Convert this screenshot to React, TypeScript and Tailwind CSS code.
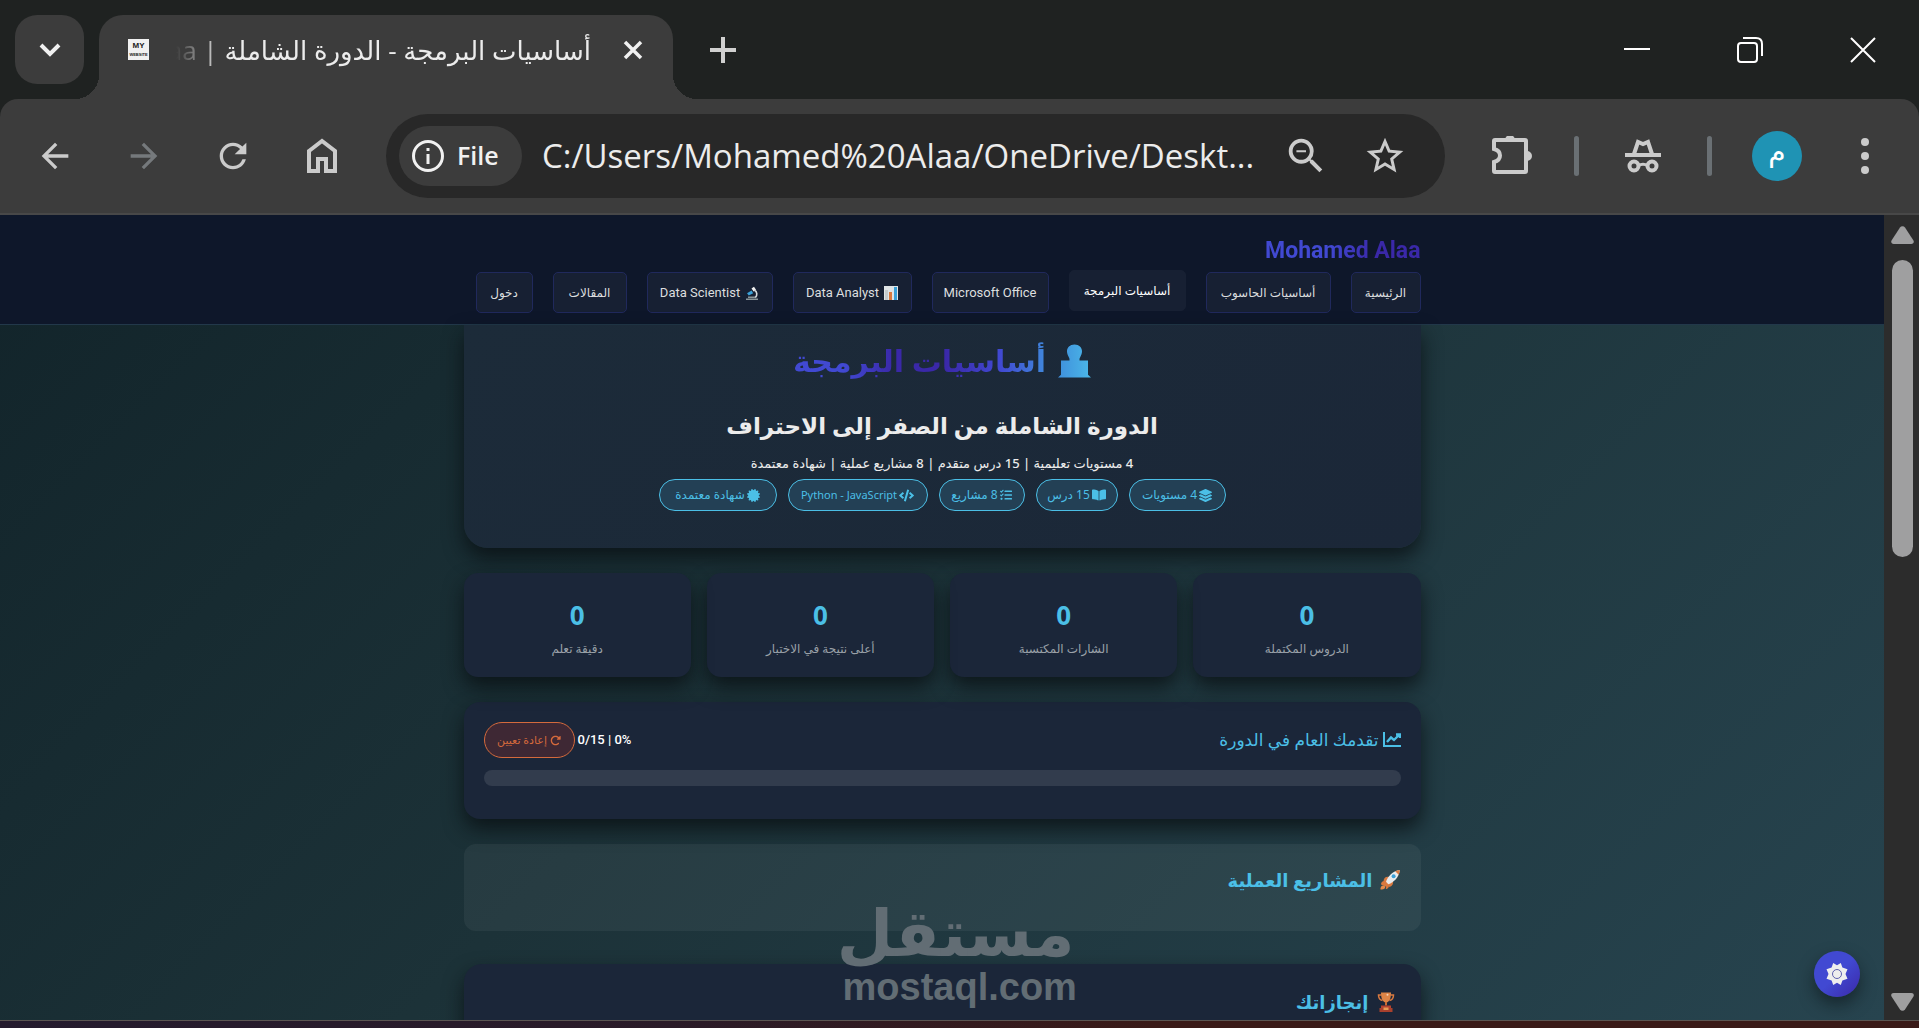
import React, { useState } from 'react';
import {
  FaLayerGroup,
  FaBookOpen,
  FaTasks,
  FaCode,
  FaCertificate,
} from 'react-icons/fa';
import { FaRotateRight } from 'react-icons/fa6';
import { MdArrowBack, MdArrowForward, MdRefresh, MdStarOutline, MdZoomOut } from 'react-icons/md';

const ChartEmoji = () => (
  <svg viewBox="0 0 14 14" className="w-[14px] h-[14px] shrink-0">
    <rect width="14" height="14" fill="#dfe4e6" />
    <rect x="1" y="4" width="3" height="10" fill="#c4cacc" />
    <rect x="5" y="6" width="3" height="8" fill="#d9793f" />
    <rect x="10" y="1" width="3" height="13" fill="#3aa0d8" />
  </svg>
);

const MicroscopeEmoji = () => (
  <svg viewBox="0 0 14 14" className="w-[14px] h-[14px] shrink-0">
    <path d="M6.5 2.5 9 .8l2 3-2.4 1.8z" fill="#f0f0f0" />
    <path d="M2 7.2 6.6 4.6l1.6 2.6-4.4 2.4z" fill="#3aa0d8" />
    <path d="M9.5 4.2c2.6 1.4 3.2 5 .8 7.4" fill="none" stroke="#d5dadc" strokeWidth="1.6" />
    <path d="M1 13.2h12M3 11.2h7" stroke="#8b9599" strokeWidth="1.4" />
  </svg>
);

const RocketEmoji = () => (
  <svg viewBox="0 0 22 22" className="w-[22px] h-[22px] shrink-0">
    <path d="M2 15.5c0-2.6 2-4 4-3.4l3.8 3.8c.6 2-1 4-3 4.2l.4-2.4z" fill="#d9793f" />
    <path d="M1.5 20.5c-.4-2.6 1-4.3 3-4.1 1.9.2 2.3 2.1.9 3.4-1 .8-2.3.9-3.9.7z" fill="#e58a4a" />
    <path d="M4.5 11.5c1-3.3 2.9-4.1 5.4-3.5l4 4c.6 2.7-.2 4.7-3.4 6z" fill="#d9793f" />
    <path d="M7 12.8C8.8 7.3 13.5 2 20.8 1c-.7 7.5-6 12.3-11.5 14.3z" fill="#e8eaec" />
    <path d="M16.2 2.3c1.4-.7 3-1.200 4.600-1.300-.1 1.700-.6 3.300-1.200 4.700z" fill="#d9793f" />
    <circle cx="14.6" cy="7.3" r="2" fill="#3aa0d8" />
  </svg>
);

const TrophyEmoji = () => (
  <svg viewBox="0 0 18 20" className="w-[18px] h-5 shrink-0">
    <path d="M4.5 3h-3c0 3 1 5 4 5.5M13.5 3h3c0 3-1 5-4 5.5" fill="none" stroke="#d9793f" strokeWidth="1.5" />
    <path d="M4 .5h10c0 5.5-1.2 9.5-5 10-3.8-.5-5-4.5-5-10z" fill="#dd8446" />
    <path d="M8 10h2v3.5H8z" fill="#c96b34" />
    <path d="M4 13.5h10v3H4z" fill="#b5432f" />
    <path d="M2.5 16h13v4h-13z" fill="#a8402d" />
    <path d="M6.5 15.5h5V18h-5z" fill="#e79a55" />
    <circle cx="10.5" cy="2.8" r="1" fill="#f3d6bd" />
  </svg>
);

const CoderEmoji = () => (
  <svg viewBox="0 0 33 34" className="w-[33px] h-[34px] shrink-0">
    <defs>
      <linearGradient id="coder" x1="0" x2="1">
        <stop offset="0" stopColor="#3f8fdc" />
        <stop offset="1" stopColor="#4bb8e8" />
      </linearGradient>
    </defs>
    <path
      d="M16.5.5c4.600 0 7.500 3 7.500 6.800 0 2.200-.8 4-1.600 5.400-.5.900-.9 1.500-.9 2.800v1H30v14.200l3 2.800H0l3-2.800V16.500h8.500v-1c0-1.300-.4-1.900-.9-2.800C9.800 11.300 9 9.500 9 7.300 9 3.500 11.900.5 16.500.5z"
      fill="url(#coder)"
    />
  </svg>
);

const ProgressIcon = () => (
  <svg viewBox="0 0 18 16" className="w-[18px] h-4 shrink-0" fill="none" stroke="currentColor" strokeWidth="2">
    <path d="M1 0v14h17" />
    <path d="M4 10l4-4.500 3 2.500 5-5M13 2.500h4V6" strokeWidth="2.400" />
  </svg>
);

const navItems = [
  { label: 'الرئيسية', width: 'w-[70px]' },
  { label: 'أساسيات الحاسوب', width: 'w-[125px]' },
  { label: 'أساسيات البرمجة', width: 'w-[117px]', active: true },
  { label: 'Microsoft Office', width: 'w-[117px]', latin: true },
  { label: 'Data Analyst', width: 'w-[119px]', latin: true, icon: <ChartEmoji /> },
  { label: 'Data Scientist', width: 'w-[126px]', latin: true, icon: <MicroscopeEmoji /> },
  { label: 'المقالات', width: 'w-[74px]' },
  { label: 'دخول', width: 'w-[57px]' },
];

const badges = [
  { label: '4 مستويات', width: 'w-[97px]', icon: <FaLayerGroup size={13} /> },
  { label: '15 درس', width: 'w-[82px]', icon: <FaBookOpen size={14} /> },
  { label: '8 مشاريع', width: 'w-[86px]', icon: <FaTasks size={12} /> },
  { label: 'Python - JavaScript', width: 'w-[140px]', icon: <FaCode size={15} />, latin: true },
  { label: 'شهادة معتمدة', width: 'w-[118px]', icon: <FaCertificate size={13} /> },
];

const stats = [
  { value: 0, label: 'الدروس المكتملة' },
  { value: 0, label: 'الشارات المكتسبة' },
  { value: 0, label: 'أعلى نتيجة في الاختبار' },
  { value: 0, label: 'دقيقة تعلم' },
];

function TabStrip() {
  return (
    <div className="h-[99px] shrink-0 flex items-end bg-[#1f2221] pl-[15px]">
      <button aria-label="Search tabs" className="w-[69px] h-[69px] mb-[15px] rounded-[22px] bg-[#3c3c3c] flex items-center justify-center">
        <svg viewBox="0 0 22 14" className="w-[22px] h-[14px]" fill="none" stroke="#f1f1f1" strokeWidth="4">
          <path d="M2 2l9 9 9-9" />
        </svg>
      </button>

      {/* Active tab */}
      <div className="relative ml-[15px] w-[574px] h-[84px] rounded-t-[24px] bg-[#3c3c3c] flex items-center pb-[15px]">
        <span className="absolute -left-6 bottom-0 w-6 h-6 bg-[radial-gradient(circle_at_0_0,transparent_24px,#3c3c3c_24px)]" />
        <span className="absolute -right-6 bottom-0 w-6 h-6 bg-[radial-gradient(circle_at_100%_0,transparent_24px,#3c3c3c_24px)]" />
        <span className="ml-[29px] w-[21px] h-[21px] bg-[#f1f1f1] flex flex-col items-center justify-center text-[#222] font-bold font-['Liberation_Sans',sans-serif]">
          <span className="text-[8px] leading-[11px]">MY</span>
          <span className="text-[4px] leading-[8px]">WEBSITE</span>
        </span>
        <span
          dir="rtl"
          className="ml-[27px] w-[415px] h-12 leading-[48px] overflow-hidden whitespace-nowrap text-[26px] text-[#ececec] font-['Open_Sans','DejaVu_Sans',sans-serif] [mask-image:linear-gradient(to_right,transparent,black_48px)]"
        >
          أساسيات البرمجة - الدورة الشاملة | Mohamed Alaa
        </span>
        <button aria-label="Close tab" className="ml-8 w-5 h-5">
          <svg viewBox="0 0 20 20" className="w-5 h-5" stroke="#f1f1f1" strokeWidth="3.5">
            <path d="M2 2l16 16M18 2L2 18" />
          </svg>
        </button>
      </div>

      <button aria-label="New tab" className="ml-[37px] mb-9 w-[26px] h-[26px]">
        <svg viewBox="0 0 26 26" className="w-[26px] h-[26px]" stroke="#d0d0d0" strokeWidth="4">
          <path d="M13 0v26M0 13h26" />
        </svg>
      </button>

      {/* Window controls */}
      <div className="ml-auto mr-[43px] mb-9 flex items-center gap-[87px]">
        <button aria-label="Minimize">
          <svg viewBox="0 0 26 26" className="w-[26px] h-[26px]" stroke="#fff" strokeWidth="2">
            <path d="M0 12h26" />
          </svg>
        </button>
        <button aria-label="Restore">
          <svg viewBox="0 0 26 26" className="w-[26px] h-[26px]" fill="none" stroke="#fff" strokeWidth="2">
            <rect x="1" y="6" width="19" height="19" rx="3" />
            <path d="M6 1h13c4 0 6 2 6 6v12" />
          </svg>
        </button>
        <button aria-label="Close">
          <svg viewBox="0 0 26 26" className="w-[26px] h-[26px]" stroke="#fff" strokeWidth="2">
            <path d="M1 1l24 24M25 1L1 25" />
          </svg>
        </button>
      </div>
    </div>
  );
}

function Toolbar() {
  const [url, setUrl] = useState('C:/Users/Mohamed%20Alaa/OneDrive/Deskt...');

  return (
    <div className="bg-[#1f2221] shrink-0">
      <div className="h-[116px] rounded-t-[18px] bg-[#3c3c3c] border-b-2 border-[#484848] flex items-center text-[#cbcbcb]">
        <div className="flex items-center gap-[49px] ml-[35px]">
          <button aria-label="Back"><MdArrowBack size={40} /></button>
          <button aria-label="Forward" className="text-[#75797c]"><MdArrowForward size={40} /></button>
          <button aria-label="Reload"><MdRefresh size={40} /></button>
          <button aria-label="Home">
            <svg viewBox="0 0 40 40" className="w-10 h-10" fill="none" stroke="currentColor" strokeWidth="4">
              <path d="M7 15 20 5l13 10v20h-9V23h-8v12H7z" />
            </svg>
          </button>
        </div>

        {/* Address bar */}
        <div className="ml-11 h-[84px] flex-1 rounded-full bg-[#282828] flex items-center pl-[13px] pr-[38px]">
          <button className="w-[123px] h-[60px] shrink-0 rounded-full bg-[#3c3c3c] flex items-center pl-3 gap-3 text-[#f1f1f1] text-[25px] font-semibold font-['Open_Sans',sans-serif]">
            <svg viewBox="0 0 34 34" className="w-[34px] h-[34px]" fill="none" stroke="currentColor" strokeWidth="3">
              <circle cx="17" cy="17" r="14.5" />
              <path d="M17 15v10M17 9v3" />
            </svg>
            File
          </button>
          <input
            aria-label="Address"
            value={url}
            onChange={e => setUrl(e.target.value)}
            className="ml-5 flex-1 min-w-0 bg-transparent outline-none text-[33px] leading-[48px] text-[#ececec] font-['Open_Sans',sans-serif]"
          />
          <button aria-label="Zoom" className="ml-4 mr-[34px]"><MdZoomOut size={46} /></button>
          <button aria-label="Bookmark"><MdStarOutline size={44} /></button>
        </div>

        <button aria-label="Extensions" className="ml-[47px]">
          <svg viewBox="0 0 40 40" className="w-10 h-10" fill="none" stroke="currentColor" strokeWidth="4">
            <path d="M4 4h29a1 1 0 0 1 1 1v30a1 1 0 0 1-1 1H3a1 1 0 0 1-1-1v-9c8-2 8-11 0-13V5a1 1 0 0 1 1-1z" />
            <path d="M13 4a5 5 0 0 1 10 0zM35 15a5 5 0 0 1 0 10z" fill="currentColor" stroke="none" />
          </svg>
        </button>
        <span className="ml-[42px] w-[5px] h-10 rounded-full bg-[#6a7074]" />
        <svg viewBox="0 0 36 34" className="ml-[46px] w-9 h-[34px]" fill="none" stroke="currentColor" strokeWidth="4">
          <path d="M0 16h36M9 15l4-12 5 2 5-2 4 12" />
          <circle cx="9" cy="27" r="4.5" />
          <circle cx="27" cy="27" r="4.5" />
          <path d="M13 27c3-2 7-2 10 0" strokeWidth="3" />
        </svg>
        <span className="ml-[46px] w-[5px] h-10 rounded-full bg-[#6a7074]" />
        <button aria-label="Profile" className="ml-10 w-[50px] h-[50px] pb-2 rounded-full bg-[#1f93b4] text-white flex items-center justify-center font-['DejaVu_Sans',sans-serif] text-[28px] leading-[30px]">
          م
        </button>
        <button aria-label="Menu" className="ml-[59px] mr-[50px] flex flex-col gap-[6px]">
          <span className="w-2 h-2 rounded-full bg-[#cbcbcb]" />
          <span className="w-2 h-2 rounded-full bg-[#cbcbcb]" />
          <span className="w-2 h-2 rounded-full bg-[#cbcbcb]" />
        </button>
      </div>
    </div>
  );
}

function Navbar() {
  return (
    <header className="bg-[#0e172a] border-b border-[#22384a] h-[110px] shrink-0">
      <div className="max-w-[957px] mx-auto pt-[18px]">
        <div className="h-9 flex items-center">
          <a href="#" dir="ltr" className="text-[23px] font-bold bg-[linear-gradient(100deg,#4149d2_40%,#3a28a8_70%)] bg-clip-text text-transparent font-['Roboto',sans-serif]">
            Mohamed Alaa
          </a>
        </div>
        <nav className="mt-[3px] flex gap-5">
          {navItems.map(item => (
            <a
              key={item.label}
              href="#"
              className={`${item.width} h-[41px] rounded-[5px] border bg-[#172033] flex items-center justify-center gap-[5px] whitespace-nowrap ${
                item.latin ? "text-[13px] font-['Roboto',sans-serif]" : 'text-[12px]'
              } ${item.active ? 'border-[#172033] text-white font-medium -translate-y-[2px]' : 'border-[#20295c] text-[#dcdedf]'}`}
            >
              {item.icon}
              <span>{item.label}</span>
            </a>
          ))}
        </nav>
      </div>
    </header>
  );
}

const cardShadow = 'shadow-[0_10px_20px_rgba(8,14,16,0.75)]';

function Course() {
  return (
    <main className="w-full max-w-[957px] mx-auto">
      {/* Hero */}
      <section className={`rounded-b-[24px] bg-[linear-gradient(135deg,#1c2b39,#1b2738)] pt-[6px] pb-[37px] text-center ${cardShadow}`}>
        <h1 className="flex justify-center items-center gap-3 h-[60px] text-[30px] font-bold">
          <CoderEmoji />
          <span className="leading-[60px] bg-[linear-gradient(to_left,#4088dc,#4149d2_18%,#3a28a8_40%,#3a28a8_60%,#4149d2_80%)] bg-clip-text text-transparent">
            أساسيات البرمجة
          </span>
        </h1>
        <h2 className="mt-[14px] text-[23px] leading-10 font-bold text-[#ececec]">الدورة الشاملة من الصفر إلى الاحتراف</h2>
        <p className="mt-2 text-[13px] leading-5 font-medium text-[#ececec]">
          4 مستويات تعليمية | 15 درس متقدم | 8 مشاريع عملية | شهادة معتمدة
        </p>
        <div className="mt-[6px] flex justify-center gap-[11px]">
          {badges.map(badge => (
            <span
              key={badge.label}
              className={`${badge.width} h-8 rounded-full border border-[#4bbfe6] bg-[#234055] text-[#4bbfe6] flex items-center justify-center gap-[2px] whitespace-nowrap ${
                badge.latin ? 'text-[11px]' : 'text-[12px]'
              }`}
            >
              {badge.icon}
              <span>{badge.label}</span>
            </span>
          ))}
        </div>
      </section>

      {/* Stats */}
      <section className="mt-[25px] grid grid-cols-4 gap-4">
        {stats.map(stat => (
          <div key={stat.label} className={`h-[104px] rounded-[14px] bg-[#1b2639] text-center pt-[22px] ${cardShadow}`}>
            <div className="text-[26px] leading-10 font-bold text-[#4bbfe6]">{stat.value}</div>
            <div className="mt-1 text-[12px] leading-5 text-[#9aa1a8]">{stat.label}</div>
          </div>
        ))}
      </section>

      {/* Progress */}
      <section className={`mt-[25px] rounded-[16px] bg-[#1b2639] px-5 pt-5 pb-[33px] ${cardShadow}`}>
        <div className="h-9 flex items-center justify-between">
          <h3 className="flex items-center gap-1 text-[17px] text-[#4bbfe6]">
            <ProgressIcon />
            <span>تقدمك العام في الدورة</span>
          </h3>
          <div className="flex items-center gap-[3px]">
            <span dir="ltr" className="text-[13px] font-medium text-white font-['Roboto',sans-serif]">0/15 | 0%</span>
            <button className="w-[91px] h-9 rounded-full border border-[#d56a3c] bg-[#3e2834] text-[#d56a3c] text-[11px] flex items-center justify-center gap-[3px] whitespace-nowrap">
              <FaRotateRight />
              إعادة تعيين
            </button>
          </div>
        </div>
        <div role="progressbar" aria-valuenow={0} className="mt-3 h-4 rounded-full bg-[#323c4d]" />
      </section>

      {/* Projects */}
      <section className="mt-[25px] rounded-[12px] bg-white/5 px-5 pt-5 pb-[35px]">
        <h3 className="h-8 flex items-center gap-[6px] text-[18px] font-bold text-[#4bbfe6]">
          <RocketEmoji />
          المشاريع العملية
        </h3>
      </section>

      {/* Achievements */}
      <section className={`mt-[33px] rounded-[18px] bg-[#1b2639] px-[26px] pt-[22px] h-[140px] ${cardShadow}`}>
        <h3 className="h-8 flex items-center gap-2 text-[18px] font-bold text-[#4bbfe6]">
          <TrophyEmoji />
          إنجازاتك
        </h3>
      </section>
    </main>
  );
}

function ScrollBar() {
  return (
    <div className="w-[35px] shrink-0 bg-[#2c2c2c] flex flex-col items-center pl-[2px] pt-[11px] pb-[9px]">
      <svg viewBox="0 0 23 18" className="w-[23px] h-[18px]" fill="#9f9fa0">
        <path d="M9 1.500a3 3 0 0 1 5 0l8.300 12.700c1.200 2 .2 3.800-2 3.800H2.700c-2.200 0-3.200-1.800-2-3.800z" />
      </svg>
      <span className="mt-4 w-[21px] h-[297px] rounded-full bg-[#9f9fa0]" />
      <svg viewBox="0 0 23 18" className="mt-auto w-[23px] h-[18px] rotate-180" fill="#9f9fa0">
        <path d="M9 1.500a3 3 0 0 1 5 0l8.300 12.700c1.200 2 .2 3.800-2 3.800H2.700c-2.200 0-3.200-1.800-2-3.800z" />
      </svg>
    </div>
  );
}

export default function App() {
  return (
    <div className="relative h-screen flex flex-col overflow-hidden">
      <TabStrip />
      <Toolbar />

      <div className="flex flex-1 min-h-0">
        <div
          dir="rtl"
          className="relative flex-1 min-w-0 flex flex-col overflow-hidden bg-[linear-gradient(135deg,#12242a,#1c3238_45%,#27444f)] font-['Noto_Sans','DejaVu_Sans',sans-serif]"
        >
          <Navbar />
          <Course />
          <button
            aria-label="Settings"
            className="absolute right-[24px] bottom-[23px] w-[46px] h-[46px] rounded-full bg-[linear-gradient(135deg,#4149d2_50%,#3a28a8)] shadow-[0_8px_16px_rgba(8,14,16,0.5)] flex items-center justify-center"
          >
            <svg viewBox="0 0 22 22" className="w-[22px] h-[22px]">
              <path
                d="M7.2 0 11 2.200 14.800 0l1.600 4.600L21.500 6.200 19.500 11l2 4.800-5.100 1.600L14.800 22 11 19.800 7.200 22l-1.600-4.600L.5 15.800 2.500 11l-2-4.800 5.100-1.600z"
                fill="#eee"
              />
              <circle cx="11" cy="11" r="4.5" fill="#eee" stroke="#5d5fae" />
            </svg>
          </button>
        </div>
        <ScrollBar />
      </div>

      {/* Desktop edge below the window */}
      <div className="h-2 shrink-0 border-t border-[#5b5652] bg-[linear-gradient(to_right,#241b2e,#2a1b28_35%,#3a1a18_60%,#3a1a18)]" />

      {/* Watermark */}
      <div className="absolute left-1/2 bottom-[22px] w-[232px] -ml-[117px] text-center whitespace-nowrap text-[#626d74] font-bold pointer-events-none">
        <div dir="rtl" className="text-[65px] leading-[68px] font-['DejaVu_Sans',sans-serif]">مستقل</div>
        <div className="text-[38px] leading-[38px] font-['Liberation_Sans',sans-serif]">mostaql.com</div>
      </div>
    </div>
  );
}
